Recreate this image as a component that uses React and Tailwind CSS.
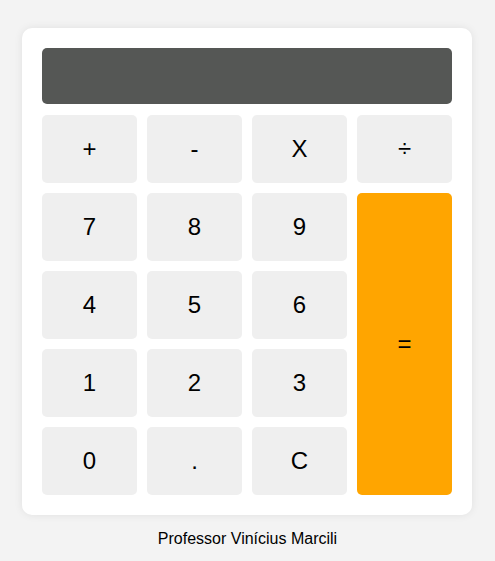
const KEYS = [
  { label: "+" },
  { label: "-" },
  { label: "X" },
  { label: "÷" },
  { label: "7" },
  { label: "8" },
  { label: "9" },
  { label: "=", equals: true },
  { label: "4" },
  { label: "5" },
  { label: "6" },
  { label: "1" },
  { label: "2" },
  { label: "3" },
  { label: "0" },
  { label: "." },
  { label: "C" },
];

export default function App() {
  return (
    <div className="min-h-screen bg-[#f3f3f3] pt-[28px] font-['Liberation_Sans',Arial,sans-serif] text-black">
      <div className="ml-[22px] w-[450px] rounded-[10px] bg-white p-5 shadow-[0_0_8px_rgba(0,0,0,0.08)]">
        <div className="mb-[11px] h-[56px] rounded-[5px] bg-[#555755]" />
        <div className="grid grid-cols-4 grid-rows-[repeat(5,68px)] gap-[10px]">
          {KEYS.map(({ label, equals }) => (
            <button
              key={label}
              className={`flex items-center justify-center rounded-[5px] text-2xl ${
                equals ? "row-span-4 bg-[#ffa500]" : "bg-[#efefef]"
              }`}
            >
              {label}
            </button>
          ))}
        </div>
      </div>
      <p className="mt-[15px] text-center text-base leading-[18px]">Professor Vinícius Marcili</p>
    </div>
  );
}
